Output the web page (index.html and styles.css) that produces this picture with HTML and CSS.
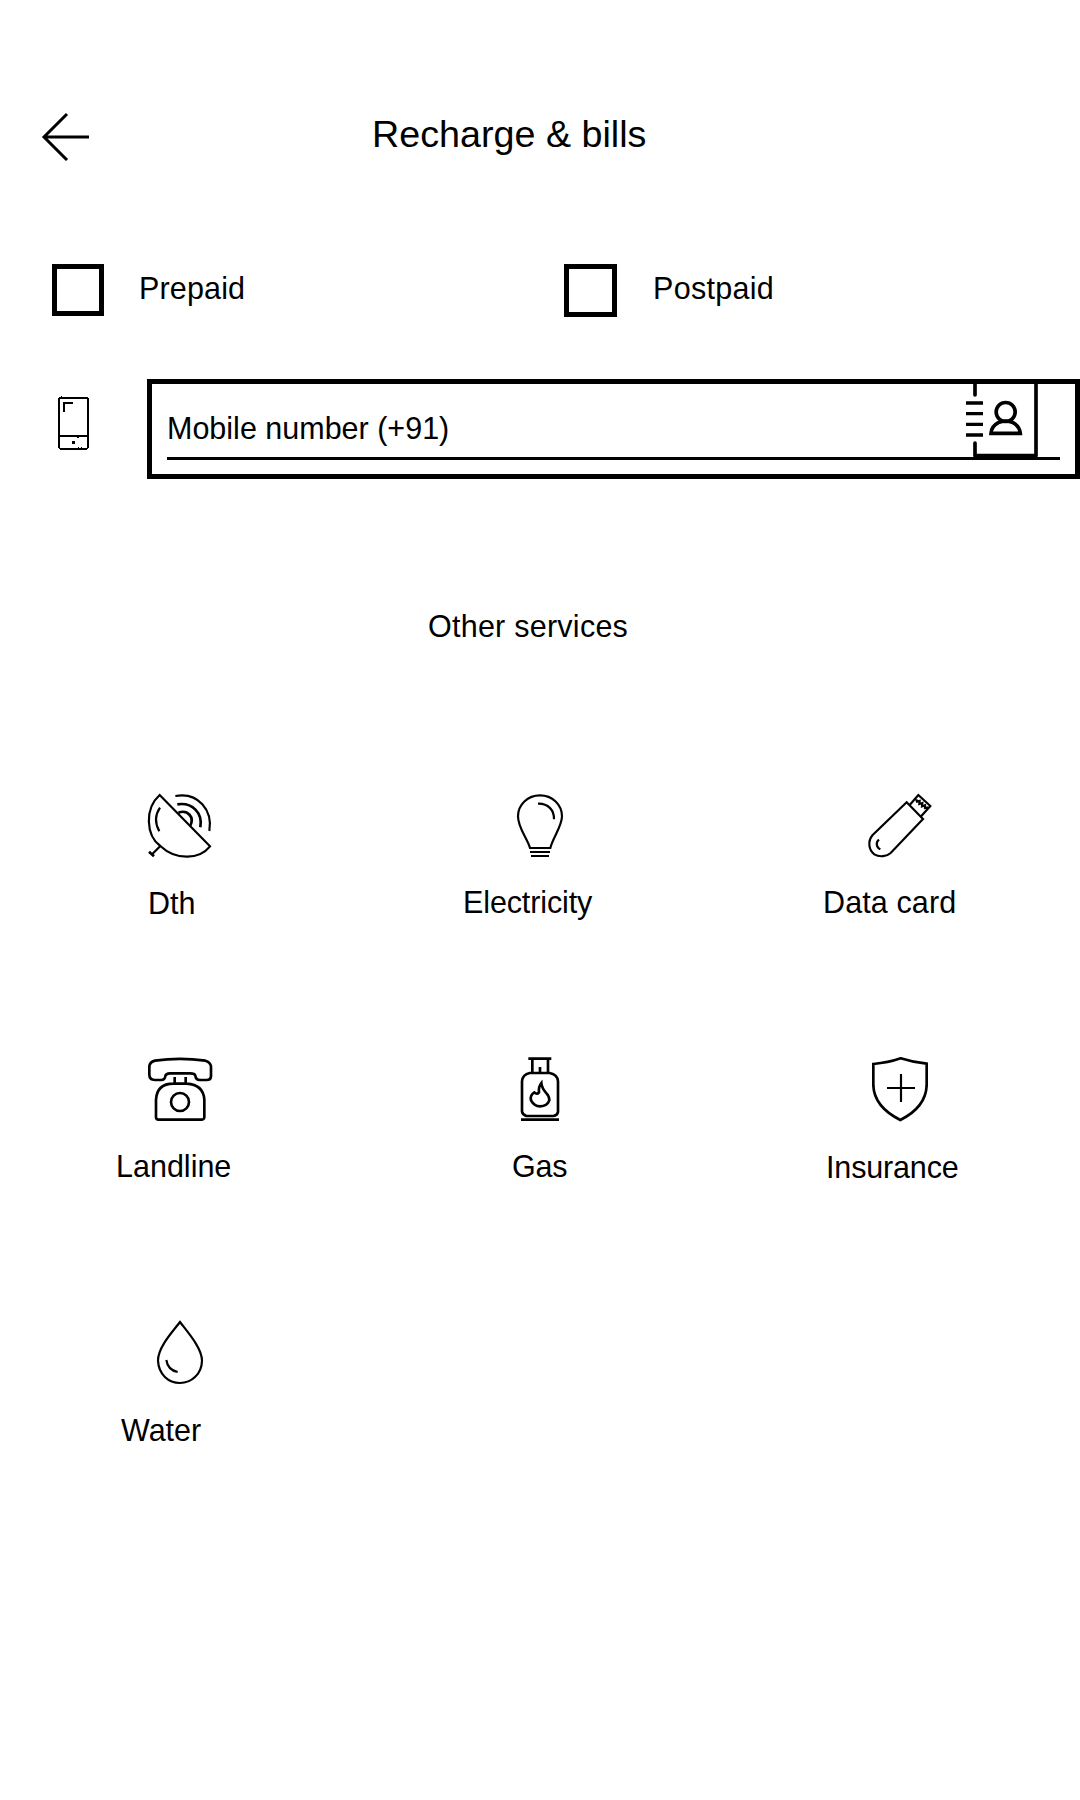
FILE: index.html
```html
<!DOCTYPE html>
<html lang="en">
<head>
<meta charset="utf-8">
<title>Recharge &amp; bills</title>
<link rel="stylesheet" href="styles.css">
</head>
<body>
<header class="header">
  <svg class="back" viewBox="0 0 50 50"><path d="M27 3 4 26 27 49M4 26H49"/></svg>
  <h1 class="title">Recharge &amp; bills</h1>
</header>
<main>
  <div class="plans">
    <label class="plan"><span class="box"></span><span class="plan-name prepaid">Prepaid</span></label>
    <label class="plan"><span class="box box-large"></span><span class="plan-name postpaid">Postpaid</span></label>
  </div>
  <div class="number">
    <svg class="phone" viewBox="81 435 105 168"><path d="M90 443H172L175 447V592L170 597H91L87 592V447ZM87 558H175M102 485V459H129"/><path class="solid" d="M126 573h9v9h-9zM141 560h6v4h-6zM144 591h3v4h-3zM153 591h3v4h-3zM93 438h3v4h-3z"/></svg>
    <div class="field">
      <div class="input">
        <span class="placeholder">Mobile number (+91)</span>
        <svg class="contacts" viewBox="105 57 225 219"><path d="M135 57V90M135 234V272H318V57" stroke-width="11" stroke-linecap="round" stroke-linejoin="round"/><path d="M108 114H159M108 146H159M108 178H159M108 210H159" stroke-width="10"/><g stroke-width="11"><circle cx="227" cy="141" r="28.5"/><path d="M183 205Q184 184 205 173Q227 164 249 173Q269 184 271 205Z"/></g></svg>
      </div>
    </div>
  </div>
  <h2 class="subtitle">Other services</h2>
  <div class="services">
    <div class="service">
      <svg class="icon" viewBox="105 30 210 210"><path d="M149 45C103 86 108 167 151 198C199 243 269 238 300 199ZM150 83C135 105 135 131 148 154M151 198 127 222M196 48C265 35 309 92 298 153"/><path class="bold" d="M117 215 132 229M202 73C247 66 279 99 271 142M205 98C233 88 255 111 240 139"/></svg>
      <span class="label dth">Dth</span>
    </div>
    <div class="service">
      <svg class="icon" viewBox="165 30 210 210"><path d="M240 204C232 174 204 145 204 109C204 74 233 46 270 46C307 46 336 74 336 109C336 139 308 174 301 204ZM240 216H300M243 228H297M264 71C294 70 313 90 312 118"/></svg>
      <span class="label electricity">Electricity</span>
    </div>
    <div class="service">
      <svg class="icon" viewBox="165 30 210 210"><path d="M290 67 188 165C172 184 176 210 193 223C209 233 231 229 242 219L339 117ZM299 75 325 45 361 78 334 108M319 58l2 7 8-2-1 9 9-3-1 10 9-3 0 8 9-2M207 179C197 187 198 201 211 208"/></svg>
      <span class="label data-card">Data card</span>
    </div>
    <div class="service">
      <svg class="icon bold" viewBox="105 39 210 210"><path d="M118 79Q119 66 135 62Q209 51 286 62Q301 66 303 79V109Q302 120 291 120H270Q257 120 256 107Q254 100 240 100H180Q168 100 166 108Q165 120 153 120H135Q118 119 118 104ZM194 111V131M227 111V131M138 232V179Q141 131 190 131H230Q280 134 283 179V232Q282 239 274 239H146Q138 239 138 232Z"/><circle cx="210" cy="186" r="27"/></svg>
      <span class="label landline">Landline</span>
    </div>
    <div class="service">
      <svg class="icon bold" viewBox="45 39 210 210"><path d="M115 56H184M127 56V99M174 56V99M150 81V99M119 99H179Q203 104 204 124V216Q202 226 190 228H109Q97 224 96 214V124Q98 103 119 99ZM93 239H207M154 129Q145 140 147 157Q141 165 133 157Q119 166 123 181Q133 199 150 199Q172 198 178 181Q178 169 170 161Q155 144 154 129Z"/></svg>
      <span class="label gas">Gas</span>
    </div>
    <div class="service">
      <svg class="icon" viewBox="165 39 210 210"><path class="bold" d="M272 55Q312 68 350 71V137C348 181 323 214 271 240C219 214 192 181 190 137V72Q235 68 272 55Z"/><path d="M231 144H315M273 102V186"/></svg>
      <span class="label insurance">Insurance</span>
    </div>
    <div class="service">
      <svg class="icon" viewBox="105 48 210 210"><path d="M210 66C189 94 144 141 144 182C146 223 175 249 210 249C245 249 275 222 276 182C276 144 231 94 210 66ZM169 180C172 201 184 212 203 216"/></svg>
      <span class="label water">Water</span>
    </div>
  </div>
</main>
</body>
</html>
```
FILE: styles.css
```css
* { box-sizing: border-box; }

body {
  margin: 0;
  min-height: 1800px;
  overflow: hidden;
  background: #fff;
  color: #000;
  font: 30.5px/36px "Liberation Sans", Arial, sans-serif;
  white-space: nowrap;
}

h1, h2 { margin: 0; font-weight: normal; }

svg {
  display: block;
  flex: none;
  fill: none;
  stroke: #000;
  stroke-width: 6.5;
}

.bold { stroke-width: 8; }
.solid { fill: #000; stroke: none; }

.header {
  display: flex;
  align-items: flex-start;
  height: 264px;
  padding: 110px 0 0 40px;
}

.back {
  width: 50px;
  height: 50px;
  margin-top: 0.5px;
  stroke-width: 3;
}

.title {
  margin-left: 282px;
  font-size: 37.7px;
  line-height: 48px;
}

.plans {
  display: grid;
  grid-template-columns: 512px 1fr;
  height: 115px;
  padding-left: 52px;
}

.plan { display: flex; }

.box {
  flex: none;
  width: 52px;
  height: 52px;
  border: 5px solid #000;
}

.box-large { width: 53px; height: 53px; }

.plan-name { margin: 6px 0 0 35px; }
.prepaid { letter-spacing: 0.15px; }
.postpaid { margin-left: 36px; letter-spacing: 0.3px; }

.number {
  display: flex;
  height: 100px;
}

.phone {
  width: 35px;
  height: 56px;
  margin: 16px 55px 0 57px;
  stroke-width: 5.5;
  shape-rendering: crispEdges;
}

.field {
  flex: 1;
  border: 5px solid #000;
  padding: 0 15px;
}

.input {
  display: flex;
  justify-content: space-between;
  height: 76px;
  border-bottom: 3px solid #000;
}

.placeholder { margin-top: 26px; }

.contacts {
  width: 75px;
  height: 73px;
  margin-right: 20px;
}

.subtitle {
  margin: 129px 0 0 428px;
  font-size: 30.5px;
  letter-spacing: 0.25px;
}

.services {
  display: grid;
  grid-template-columns: repeat(3, 360px);
  grid-auto-rows: 263px;
  margin-top: 146px;
}

.service { display: flex; flex-direction: column; }

.icon {
  width: 70px;
  height: 70px;
  margin-left: 145px;
}

.label { margin-top: 24px; }
.dth { margin: 25px 0 0 148px; }
.electricity { margin-left: 103px; letter-spacing: -0.12px; }
.data-card { margin-left: 103px; letter-spacing: 0.12px; }
.landline { margin: 25px 0 0 116px; }
.gas { margin: 25px 0 0 152px; letter-spacing: -0.2px; }
.insurance { margin: 26px 0 0 106px; letter-spacing: -0.15px; }
.water { margin: 26px 0 0 121px; }
```
